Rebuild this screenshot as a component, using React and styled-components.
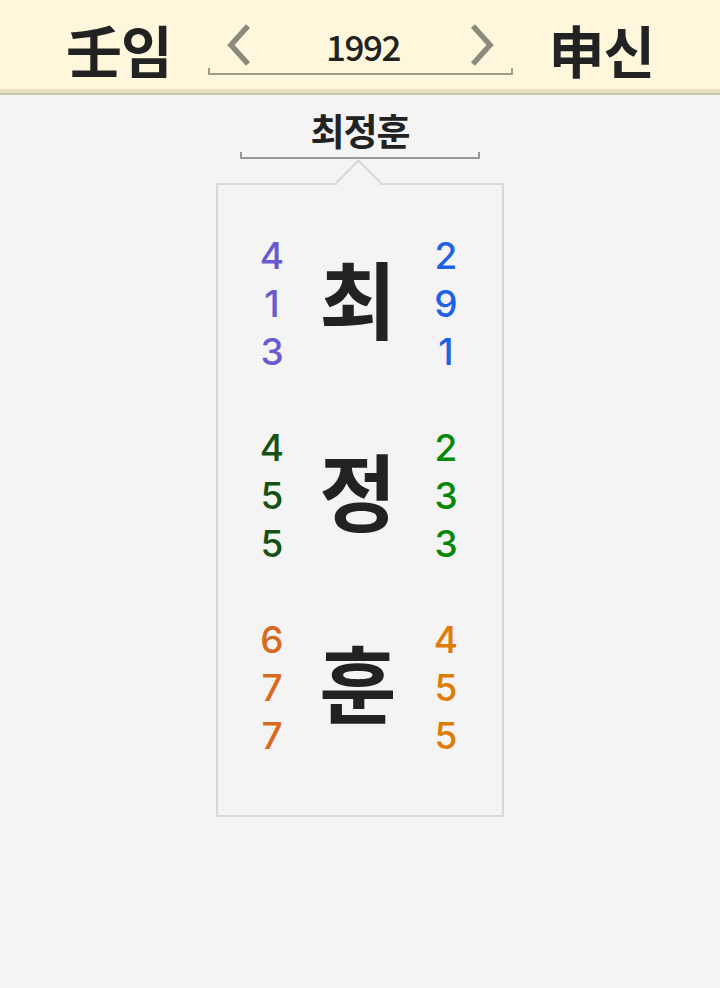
import React from "react";
import styled, { createGlobalStyle } from "styled-components";

const Global = createGlobalStyle`
  html, body { margin: 0; padding: 0; background: #f4f4f4; }
  body { font-family: "Noto Sans CJK KR", "Noto Sans", sans-serif; color: #222; }
`;

const Page = styled.div`
  width: 720px;
  min-height: 988px;
  background: #f4f4f4;
  display: flex;
  flex-direction: column;
  align-items: center;
`;

const Header = styled.header`
  box-sizing: border-box;
  width: 100%;
  height: 93px;
  padding-top: 8px;
  background: #fef7dc;
  border-bottom: 4px solid #e5dec3;
  box-shadow: 0 2px 0 #cbc5ae;
  display: flex;
  align-items: center;
  justify-content: center;
  gap: 36px;
`;

const Title = styled.div`
  font-size: 56px;
  font-weight: 700;
  line-height: 1;
  color: #222;
  letter-spacing: -1px;
`;

const Nav = styled.div`
  width: 305px;
  display: flex;
  flex-direction: column;
`;

const NavRow = styled.div`
  height: 46px;
  display: flex;
  align-items: center;
  justify-content: space-between;
  padding: 0 18px;
`;

const Year = styled.div`
  font-size: 35px;
  font-weight: 500;
  line-height: 1;
  letter-spacing: -1.5px;
  color: #222;
  padding-left: 6px;
`;

const Bracket = styled.div`
  box-sizing: border-box;
  width: ${(p) => p.$w}px;
  height: 7px;
  border: 2px solid ${(p) => p.$c};
  border-top: none;
`;

const Name = styled.div`
  margin-top: 15px;
  font-size: 37px;
  font-weight: 700;
  line-height: 44px;
  letter-spacing: -1px;
  color: #222;
`;

const Card = styled.div`
  position: relative;
  box-sizing: border-box;
  margin-top: 24px;
  width: 288px;
  border: 2px solid #d9d9d9;
  padding: 47px 0 55px;
  display: flex;
  flex-direction: column;
  gap: 48px;

  &::before {
    content: "";
    position: absolute;
    left: 50%;
    top: -19px;
    width: 33px;
    height: 33px;
    margin-left: -18px;
    box-sizing: border-box;
    background: #f4f4f4;
    border-top: 2px solid #d6d6d6;
    border-left: 2px solid #d6d6d6;
    transform: rotate(45deg);
  }
`;

const Row = styled.div`
  display: grid;
  grid-template-columns: 40px 132px 44px;
  justify-content: center;
  align-items: center;
`;

const Nums = styled.div`
  display: flex;
  flex-direction: column;
  align-items: center;
  font-family: Inter, "Noto Sans", sans-serif;
  font-size: 37px;
  font-weight: 500;
  line-height: 48px;
  color: ${(p) => p.$c};
`;

const Big = styled.div`
  text-align: center;
  font-size: 84px;
  font-weight: 700;
  line-height: 1;
  color: #222;
  margin-bottom: 14px;
`;

const Chevron = ({ dir }) => (
  <svg width="26" height="44" viewBox="0 0 26 44">
    <path
      d={dir === "left" ? "M22 3 L5 22 L22 41" : "M4 3 L21 22 L4 41"}
      fill="none"
      stroke="#8b8a7c"
      strokeWidth="5.5"
    />
  </svg>
);

const rows = [
  { ch: "최", l: ["4", "1", "3"], r: ["2", "9", "1"], lc: "#6a5acd", rc: "#1f62e4" },
  { ch: "정", l: ["4", "5", "5"], r: ["2", "3", "3"], lc: "#145214", rc: "#058805" },
  { ch: "훈", l: ["6", "7", "7"], r: ["4", "5", "5"], lc: "#d8691f", rc: "#de7c05" },
];

export default function App() {
  return (
    <Page>
      <Global />
      <Header>
        <Title>壬임</Title>
        <Nav>
          <NavRow>
            <Chevron dir="left" />
            <Year>1992</Year>
            <Chevron dir="right" />
          </NavRow>
          <Bracket $w={305} $c="#a09c88" />
        </Nav>
        <Title>申신</Title>
      </Header>
      <Name>최정훈</Name>
      <Bracket $w={240} $c="#999999" />
      <Card>
        {rows.map((r) => (
          <Row key={r.ch}>
            <Nums $c={r.lc}>
              {r.l.map((n, i) => (
                <span key={i}>{n}</span>
              ))}
            </Nums>
            <Big>{r.ch}</Big>
            <Nums $c={r.rc}>
              {r.r.map((n, i) => (
                <span key={i}>{n}</span>
              ))}
            </Nums>
          </Row>
        ))}
      </Card>
    </Page>
  );
}
